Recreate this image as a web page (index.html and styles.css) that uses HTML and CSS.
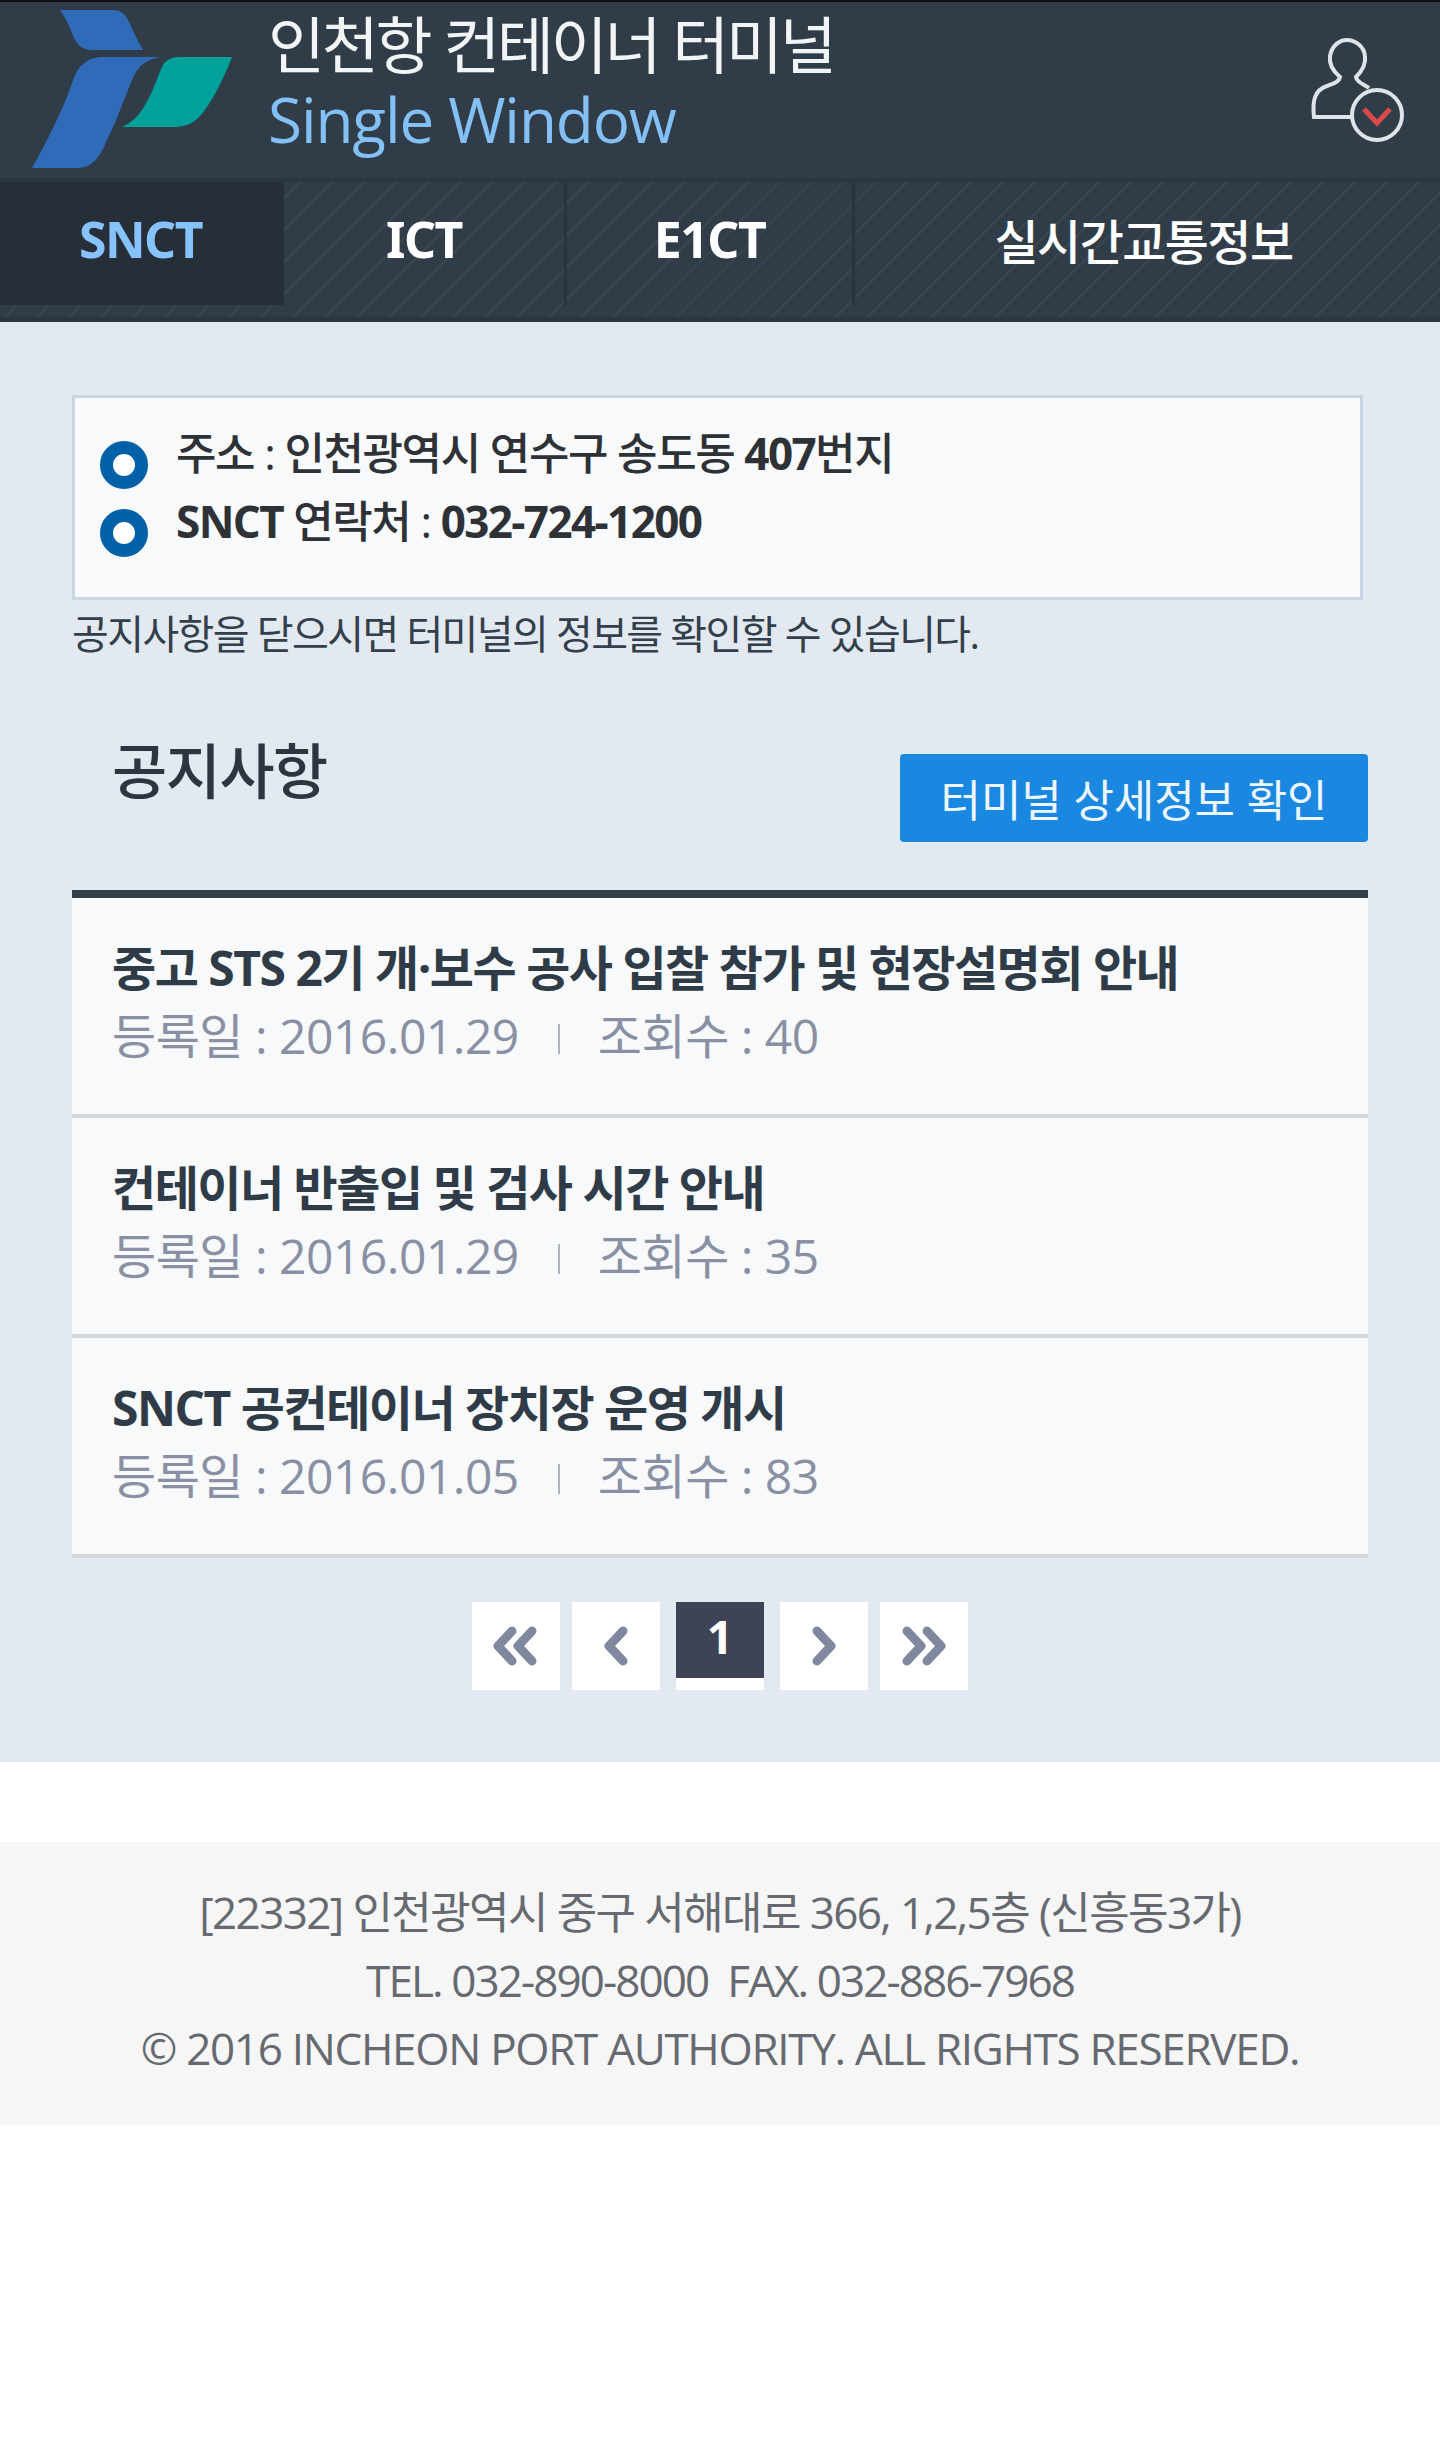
FILE: index.html
```html
<!DOCTYPE html>
<html lang="ko">
<head>
<meta charset="utf-8">
<title>인천항 컨테이너 터미널 Single Window</title>
<link rel="stylesheet" href="styles.css">
</head>
<body>
<header class="top">
  <svg class="logo" viewBox="0 0 210 162" width="210" height="162" aria-hidden="true">
    <path fill="#2f6bb8" d="M31 2H84C90 2 95 5 98 10C104 22 108 32 114 42H63C54 42 48 37 45 30C42 22 37 10 31 2Z"/>
    <path fill="#2f6bb8" d="M131 49C118 52 112 56 107 64C100 76 92 104 78 132C72 146 65 160 49 160H3C18 134 30 108 38 89C44 74 46 62 54 56C60 51 66 49 74 49Z"/>
    <path fill="#00a19b" d="M203 49H151C142 49 136 52 133 59C128 70 124 84 116 97C110 108 102 115 93 119H146C158 119 166 114 172 107C182 95 193 75 203 49Z"/>
  </svg>
  <div class="brand">
    <div class="brand-ko">인천항 컨테이너 터미널</div>
    <div class="brand-en">Single Window</div>
  </div>
  <svg class="user" viewBox="0 0 96 106" width="96" height="106" aria-hidden="true">
    <path fill="none" stroke="#dfe4ea" stroke-width="4" d="M60 79H5C3 62 6 52 18 48C25 45 30 44 31 39C24 33 20 25 21 18C23 7 31 2 38 2C46 2 55 8 56 18C57 25 53 33 47 39C48 45 55 46 60 50"/>
    <circle cx="68" cy="77" r="25" fill="#303d48" stroke="#dfe4ea" stroke-width="4"/>
    <path fill="none" stroke="#d94a4a" stroke-width="5" d="M55 71L68 85L81 71"/>
  </svg>
</header>
<nav class="tabs">
  <a class="tab tab-a is-active">SNCT</a>
  <a class="tab tab-b">ICT</a>
  <a class="tab tab-c">E1CT</a>
  <a class="tab tab-d">실시간교통정보</a>
</nav>
<main class="content">
  <section class="info">
    <ul class="info-list">
      <li class="info-item"><span>주소 : 인천광역시 연수구 송도동 <b class="strong">407</b>번지</span></li>
      <li class="info-item"><span><b class="strong">SNCT</b> 연락처 : <b class="strong">032-724-1200</b></span></li>
    </ul>
  </section>
  <p class="note">공지사항을 닫으시면 터미널의 정보를 확인할 수 있습니다.</p>
  <div class="head">
    <h2 class="head-title">공지사항</h2>
    <a class="detail-btn">터미널 상세정보 확인</a>
  </div>
  <ul class="notices">
    <li class="notice">
      <div class="notice-title">중고 STS 2기 개·보수 공사 입찰 참가 및 현장설명회 안내</div>
      <div class="notice-meta"><span>등록일 : 2016.01.29</span><i class="sep"></i><span>조회수 : 40</span></div>
    </li>
    <li class="notice">
      <div class="notice-title">컨테이너 반출입 및 검사 시간 안내</div>
      <div class="notice-meta"><span>등록일 : 2016.01.29</span><i class="sep"></i><span>조회수 : 35</span></div>
    </li>
    <li class="notice">
      <div class="notice-title">SNCT 공컨테이너 장치장 운영 개시</div>
      <div class="notice-meta"><span>등록일 : 2016.01.05</span><i class="sep"></i><span>조회수 : 83</span></div>
    </li>
  </ul>
  <div class="pager">
    <a class="page"><svg viewBox="0 0 88 88" width="88" height="88"><path class="chev" d="M30 29L16 44L30 59M50 29L36 44L50 59" transform="translate(10 0)"/></svg></a>
    <a class="page"><svg viewBox="0 0 88 88" width="88" height="88"><path class="chev" d="M51 29L37 44L51 59"/></svg></a>
    <a class="page page-current"><span class="page-num">1</span></a>
    <a class="page"><svg viewBox="0 0 88 88" width="88" height="88"><path class="chev" d="M37 29L51 44L37 59"/></svg></a>
    <a class="page"><svg viewBox="0 0 88 88" width="88" height="88"><path class="chev" d="M27 29L41 44L27 59M47 29L61 44L47 59"/></svg></a>
  </div>
</main>
<footer class="foot">
  <p class="foot-line foot-addr">[22332] 인천광역시 중구 서해대로 366, 1,2,5층 (신흥동3가)</p>
  <p class="foot-line foot-tel">TEL. 032-890-8000&nbsp; FAX. 032-886-7968</p>
  <p class="foot-line foot-copy">© 2016 INCHEON PORT AUTHORITY. ALL RIGHTS RESERVED.</p>
</footer>
</body>
</html>
```
FILE: styles.css
```css
*, *::before, *::after { box-sizing: border-box; }
html, body { margin: 0; padding: 0; background: #fff; }
body { font-family: "Open Sans", "Noto Sans CJK KR", sans-serif; color: #333f4a; height: 2462px; }
ul { list-style: none; margin: 0; padding: 0; }
p, h2 { margin: 0; }

.top { height: 178px; background: #303d48; border-top: 2px solid #0d1013; display: flex; align-items: flex-start; padding: 6px 35px 0 29px; }
.logo { flex: none; }
.brand { margin-left: 29px; flex: 1; }
.brand-ko { font-family: "Noto Sans CJK KR", sans-serif; font-size: 62px; line-height: 68px; font-weight: 400; color: #f2f4f6; letter-spacing: -3.3px; }
.brand-en { margin-top: 3px; font-family: "Open Sans", sans-serif; font-size: 62px; line-height: 80px; font-weight: 400; color: #82c0f5; letter-spacing: -1.1px; }
.user { flex: none; margin-top: 30px; }

.tabs { height: 144px; padding: 4px 0 17px; display: flex; background-color: #303d48; background-image: linear-gradient(#2a3640 0 4px, transparent 4px calc(100% - 5px), #2b3640 calc(100% - 5px)), repeating-linear-gradient(-45deg, #3a4651 0 2px, transparent 2px 22.6px); }
.tab { display: flex; align-items: center; justify-content: center; color: #fff; font-family: "Noto Sans", "Noto Sans CJK KR", sans-serif; font-weight: 700; font-size: 50px; letter-spacing: -1.5px; border-right: 3px solid #28343e; padding-bottom: 10px; }
.tab-a { width: 284px; border-right: 0; padding-right: 3px; }
.tab-b { width: 283px; }
.tab-c { width: 288px; }
.tab-d { flex: 1; border-right: 0; padding-right: 8px; font-family: "Noto Sans CJK KR", sans-serif; font-weight: 500; font-size: 48px; letter-spacing: -1.6px; }
.is-active { background: #262f38; color: #86c2fb; }

.content { background: #e2e9f1; height: 1440px; padding: 73px 72px 0; }
.info { height: 205px; border: 3px solid #c9d5e0; background: #f7f9fb; padding: 19px 25px 0; width: 1291px; }
.info-item { display: flex; align-items: center; height: 68px; font-size: 44px; font-weight: 500; letter-spacing: -1.4px; color: #2e3135; padding-left: 76px; position: relative; }
.info-item::before { content: ""; position: absolute; left: 0; top: 24px; width: 48px; height: 48px; border-radius: 50%; border: 13px solid #0060a8; background: #fff; }
.strong { font-weight: 700; letter-spacing: -1.6px; }
.note { margin-top: 10px; font-size: 40px; line-height: 48px; letter-spacing: -1.6px; color: #333f4a; }
.head { display: flex; justify-content: space-between; align-items: flex-start; height: 232px; }
.head-title { padding-left: 40px; margin-top: 70px; font-family: "Noto Sans CJK KR", sans-serif; font-size: 60px; line-height: 80px; font-weight: 500; letter-spacing: -1.5px; color: #2b3640; }
.detail-btn { margin-top: 96px; width: 468px; height: 88px; background: #1a88e0; border-radius: 4px; color: #eef6fd; font-family: "Noto Sans CJK KR", sans-serif; font-size: 44px; display: flex; align-items: center; justify-content: center; letter-spacing: -0.2px; }

.notices { border-top: 8px solid #333f4a; }
.notice { height: 220px; background: #f7f9fb; border-bottom: 4px solid #d2d7de; padding: 36px 40px 0; }
.notice-title { font-size: 48px; line-height: 68px; font-weight: 700; letter-spacing: -1.5px; color: #2f3c47; }
.notice-meta { display: flex; align-items: center; font-size: 48px; line-height: 68px; color: #8a90a3; letter-spacing: -0.5px; }
.sep { width: 2px; height: 30px; background: #b0b4c0; margin: 6px 38px 0 39px; }

.pager { display: flex; justify-content: center; gap: 12px; margin-top: 44px; }
.page { width: 88px; height: 88px; background: #fff; display: block; }
.page svg { display: block; }
.chev { fill: none; stroke: #8088a0; stroke-width: 9; stroke-linecap: round; stroke-linejoin: round; }
.page-current { margin: 0 4px; }
.page-num { display: block; height: 76px; background: #3e4356; color: #fff; text-align: center; font-size: 46px; font-weight: 700; line-height: 68px; }

.foot { margin-top: 80px; height: 283px; background: #f6f6f6; padding-top: 36px; text-align: center; }
.foot-line { font-size: 44px; line-height: 68px; color: #666a70; }
.foot-addr { letter-spacing: -1.6px; }
.foot-tel { letter-spacing: -1.9px; }
.foot-copy { letter-spacing: -1.3px; }
```
